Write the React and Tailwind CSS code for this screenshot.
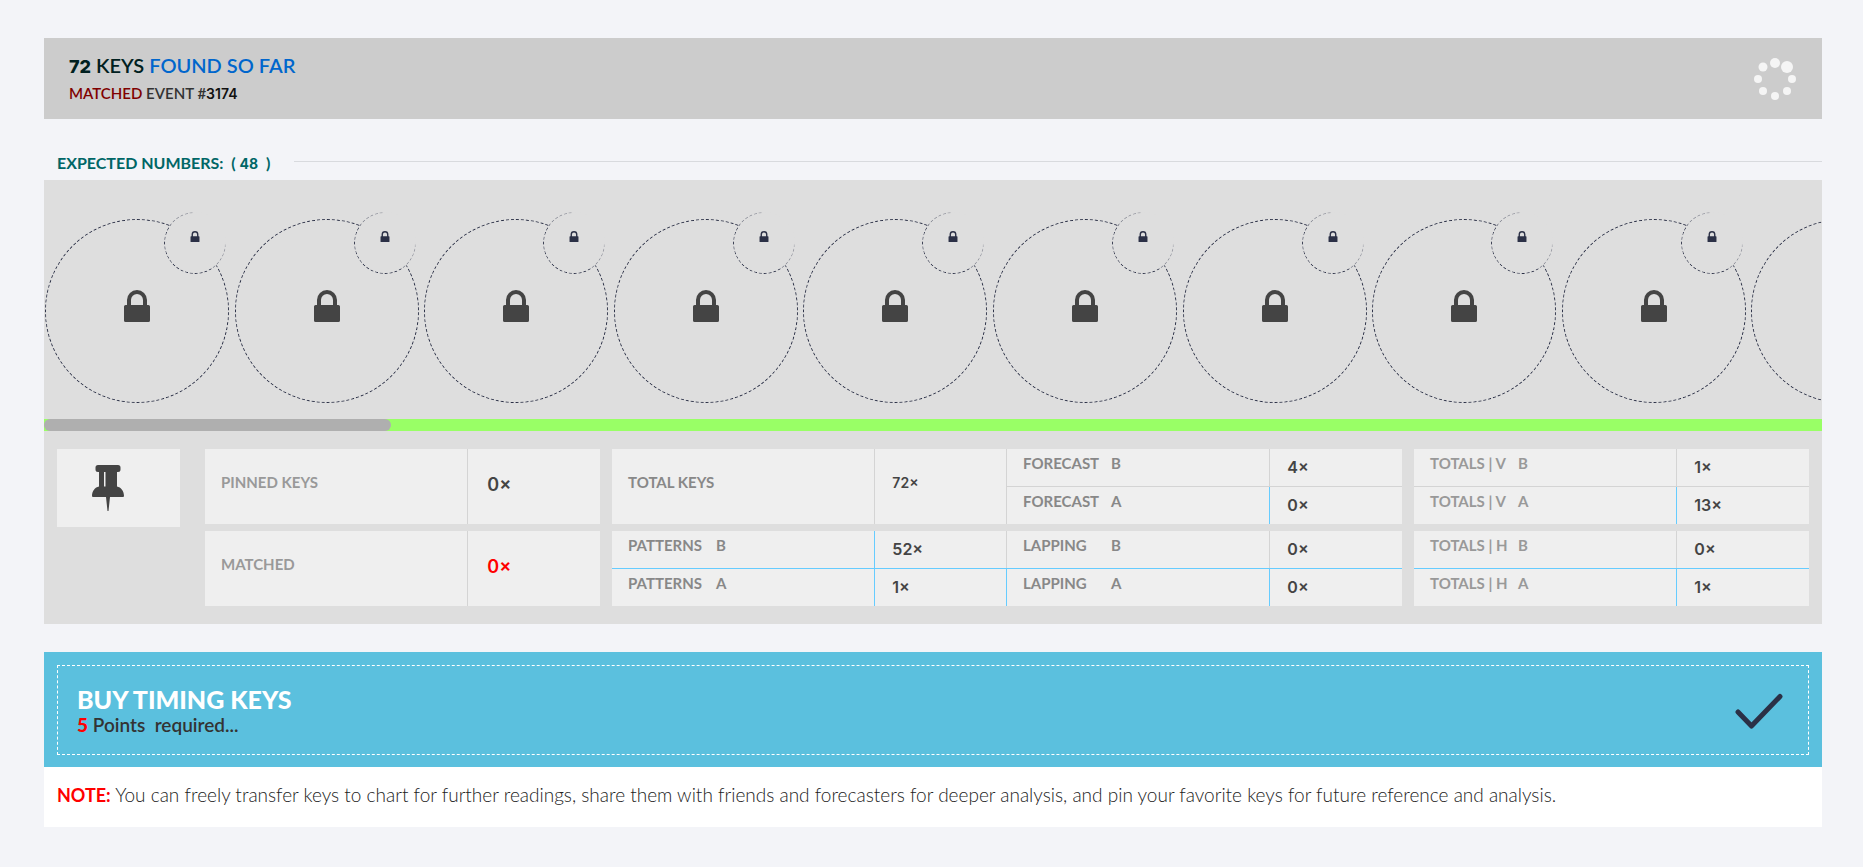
import React from "react";

const LOCK_COUNT = 48;

const LockIcon = ({ className }) => (
  <svg viewBox="0 0 26 32" fill="currentColor" className={className} aria-hidden="true">
    <path
      fillRule="evenodd"
      d="M3 15V10a10 10 0 0 1 20 0v5h1.400A1.600 1.600 0 0 1 26 16.600V30.400A1.600 1.600 0 0 1 24.400 32H1.600A1.600 1.600 0 0 1 0 30.400V16.600A1.600 1.600 0 0 1 1.600 15zM7 15h12v-5a6 6 0 0 0-12 0z"
    />
  </svg>
);

const PinIcon = ({ className }) => (
  <svg viewBox="0 0 32 46" fill="currentColor" className={className} aria-hidden="true">
    <path
      fillRule="evenodd"
      d="M6 0h20a2.500 2.500 0 0 1 2.500 2.500v2A2.500 2.500 0 0 1 26 7h-1v14.500c4 .8 7 4.500 7 9.500a1 1 0 0 1-1 1H18L16.500 46h-1L14 32H1a1 1 0 0 1-1-1c0-5 3-8.700 7-9.500V7H6a2.500 2.500 0 0 1-2.500-2.500v-2A2.500 2.500 0 0 1 6 0zM12 7v14.500h1.500V7z"
    />
  </svg>
);

const Spinner = () => (
  <svg viewBox="0 0 44 44" fill="#f5f5f5" className="h-[44px] w-[44px]" role="img" aria-label="Loading">
    <circle cx="22" cy="6" r="5" />
    <circle cx="34" cy="10" r="6" />
    <circle cx="39" cy="22" r="4" />
    <circle cx="34" cy="34" r="4" />
    <circle cx="22" cy="39" r="4" />
    <circle cx="10" cy="34" r="4" />
    <circle cx="5" cy="22" r="4" />
    <circle cx="10" cy="10" r="4.500" />
  </svg>
);

const LockedNumber = () => (
  <li className="relative h-[184px] w-[184px] rounded-full border border-dashed border-[#2b3046]">
    <div className="flex h-full items-center justify-center pb-2.5 text-[#444444]">
      <LockIcon className="h-8 w-[26px]" />
    </div>
    <div className="absolute -top-2 right-0.5 flex h-[62px] w-[62px] justify-center rounded-full bg-[#dedede] pt-[19px] text-[#2b3046]">
      <LockIcon className="h-[11px] w-[10px]" />
      {/* Ring fades away towards the top right */}
      <div className="absolute inset-0 rounded-full border border-dashed border-[#2b3046] mask-[linear-gradient(225deg,transparent_26%,rgba(0,0,0,0.4)_28%,rgba(0,0,0,0.5)_54%,black_57%)]" />
    </div>
  </li>
);

// A label with its count on the right, full height of the card
const SingleStat = ({ label, value, labelClass, valueClass }) => (
  <div className="flex h-[75px] bg-[#efefef]">
    <div className={`flex w-2/3 items-center border-r border-[#d4d4d4] px-4 pb-2 text-[15px] font-bold ${labelClass}`}>
      {label}
    </div>
    <div className={`flex w-1/3 items-center font-[Inter] font-semibold ${valueClass}`}>{value}×</div>
  </div>
);

// Two stacked rows, B over A
const DoubleStat = ({ label, rows, labelClass, lineClass, topDivider, bottomDivider, topEdge = "", bottomEdge = "" }) => (
  <div className="flex h-[75px] flex-col bg-[#efefef]">
    {rows.map((row, index) => (
      <div key={row.side} className={`flex flex-1 ${index === 0 ? `border-b ${lineClass}` : ""}`}>
        <div className={`flex w-2/3 border-r px-4 pt-0.5 text-[15px] leading-6 font-bold ${labelClass} ${index === 0 ? topDivider : bottomDivider}`}>
          <span className="w-[88px]">{label}</span>
          <span>{row.side}</span>
        </div>
        <div className={`w-1/3 pt-1.5 pl-[17px] font-[Inter] text-base leading-6 font-semibold text-[#444444] ${index === 0 ? topEdge : bottomEdge}`}>
          {row.value}×
        </div>
      </div>
    ))}
  </div>
);

const grayLine = "border-[#d4d4d4]";
const blueLine = "border-[#66ccff]";

const App = () => {
  return (
    <main className="min-h-screen bg-[#f3f4f8] py-[38px] pr-[41px] pl-11 font-['Lato',sans-serif] text-[#333333]">
      {/* Header */}
      <header className="flex h-[81px] items-center justify-between bg-[#cccccc] px-[25px]">
        <div>
          <h1 className="text-xl leading-7 font-semibold text-[#002020]">
            <b className="font-[Inter] text-lg leading-7 font-extrabold">72</b> KEYS <span className="text-[#0066cc]">FOUND SO FAR</span>
          </h1>
          <p className="text-[15px] leading-6 font-semibold">
            <span className="text-[#800000]">MATCHED</span> EVENT #<b className="font-[Inter] text-sm leading-6 font-semibold text-[#111111]">3174</b>
          </p>
        </div>
        <Spinner />
      </header>

      {/* Expected numbers */}
      <div className="mt-7 flex h-[33px] items-center pb-1 pl-[13px]">
        <h2 className="pt-0.5 text-base leading-6 font-bold whitespace-pre text-[#006666]">
          EXPECTED NUMBERS:  ( <span className="font-[Inter] text-sm">48</span>  )
        </h2>
        <div className="ml-6 flex-1 border-t border-[#d8dade]" />
      </div>

      <section className="bg-[#dedede]">
        <ul className="grid auto-cols-[10.67%] grid-flow-col overflow-hidden pt-[39px] pb-4 pl-px">
          {Array.from({ length: LOCK_COUNT }).map((_, index) => (
            <LockedNumber key={index} />
          ))}
        </ul>
        <div className="h-3 bg-[#99ff66]">
          <div className="h-3 w-[19.5%] rounded-full bg-[#afafaf]" />
        </div>

        {/* Stats */}
        <div className="flex items-start px-[13px] py-[18px]">
          <button type="button" aria-label="Pin keys" className="mr-[25px] flex h-[78px] w-[123px] justify-center bg-[#efefef] pt-4 pr-[22px] text-[#444444]">
            <PinIcon className="h-[46px] w-8" />
          </button>
          <div className="flex flex-1 gap-3">
            <div className="flex flex-1 flex-col gap-[7px]">
              <SingleStat label="PINNED KEYS" value="0" labelClass="text-[#999999]" valueClass="pl-[19px] pb-1 text-lg text-[#444444]" />
              <SingleStat label="MATCHED" value="0" labelClass="text-[#999999]" valueClass="pl-[19px] pb-1 text-lg text-[#ff0000]" />
            </div>
            <div className="grid flex-2 grid-cols-2 gap-y-[7px]">
              <SingleStat label="TOTAL KEYS" value="72" labelClass="text-[#888888]" valueClass="border-r border-[#d4d4d4] pl-[17px] pb-2 text-sm text-[#444444]" />
              <DoubleStat
                label="FORECAST"
                rows={[{ side: "B", value: 4 }, { side: "A", value: 0 }]}
                labelClass="text-[#888888]"
                lineClass={grayLine} topDivider={grayLine} bottomDivider={blueLine}
              />
              <DoubleStat
                label="PATTERNS"
                rows={[{ side: "B", value: 52 }, { side: "A", value: 1 }]}
                labelClass="text-[#888888]"
                lineClass={blueLine} topDivider={blueLine} bottomDivider={blueLine}
                topEdge="border-r border-[#d4d4d4]" bottomEdge="border-r border-[#66ccff]"
              />
              <DoubleStat
                label="LAPPING"
                rows={[{ side: "B", value: 0 }, { side: "A", value: 0 }]}
                labelClass="text-[#888888]"
                lineClass={blueLine} topDivider={grayLine} bottomDivider={blueLine}
              />
            </div>
            <div className="flex flex-1 flex-col gap-[7px]">
              <DoubleStat
                label="TOTALS | V"
                rows={[{ side: "B", value: 1 }, { side: "A", value: 13 }]}
                labelClass="text-[#999999]"
                lineClass={grayLine} topDivider={grayLine} bottomDivider={blueLine}
              />
              <DoubleStat
                label="TOTALS | H"
                rows={[{ side: "B", value: 0 }, { side: "A", value: 1 }]}
                labelClass="text-[#999999]"
                lineClass={blueLine} topDivider={grayLine} bottomDivider={blueLine}
              />
            </div>
          </div>
        </div>
      </section>

      {/* Buy */}
      <section className="mt-7 bg-white">
        <div className="bg-[#5bc0de] p-[13px] pb-3">
          <button type="button" className="flex h-[90px] w-full items-center justify-between border border-dashed border-white pt-0.5 pr-[25px] pl-[19px] text-left">
            <span>
              <span className="block text-[25px] leading-7 font-black text-white">BUY TIMING KEYS</span>
              <span className="block text-[19px] leading-6 font-semibold whitespace-pre text-[#333333]">
                <b className="text-[#ff0000]">5</b> Points  required...
              </span>
            </span>
            <svg viewBox="0 0 48 36" fill="none" stroke="#2b3046" strokeWidth="5" strokeLinecap="round" strokeLinejoin="round" className="h-9 w-12" aria-hidden="true">
              <path d="M3 19l13.500 14L45 3.500" />
            </svg>
          </button>
        </div>
        <p className="px-[13px] pt-4 pb-5 text-[19px] leading-6 font-light text-[#222222]">
          <b className="text-lg leading-6 font-bold text-[#ff0000]">NOTE:</b> You can freely transfer keys to chart for further readings, share them with friends and forecasters for deeper analysis, and pin your favorite keys for future reference and analysis.
        </p>
      </section>
    </main>
  );
};

export default App;
